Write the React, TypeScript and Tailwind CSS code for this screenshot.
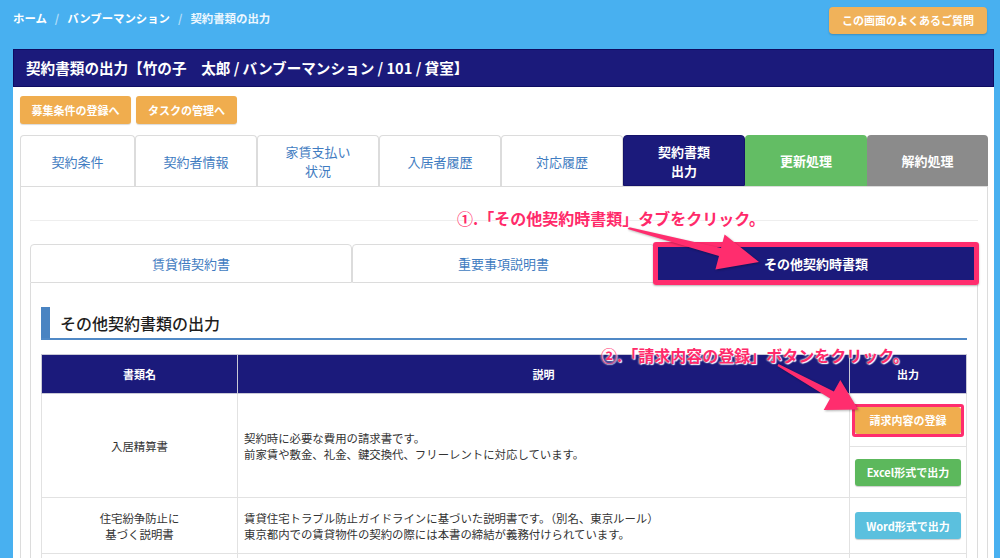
const navy = "bg-[#1b1a7b]";

const mainTabs = [
  { label: "契約条件", w: "w-[115px]" },
  { label: "契約者情報", w: "w-[122px]" },
  { label: "家賃支払い\n状況", w: "w-[122px]" },
  { label: "入居者履歴", w: "w-[122px]" },
  { label: "対応履歴", w: "w-[122px]" },
];

function OrangeBtn({ children, className = "" }: { children: React.ReactNode; className?: string }) {
  return (
    <button
      type="button"
      className={`flex h-[28px] items-center justify-center rounded-[3px] bg-[#f0ad4e] text-[11px] font-bold text-white shadow-[0_1px_1px_rgba(0,0,0,0.15)] ${className}`}
    >
      {children}
    </button>
  );
}

function TableBtn({ children, color }: { children: React.ReactNode; color: string }) {
  return (
    <button
      type="button"
      className={`flex h-[27px] w-[106px] items-center justify-center rounded-[3px] text-[11px] font-bold text-white shadow-[0_1px_1px_rgba(0,0,0,0.2)] ${color}`}
    >
      {children}
    </button>
  );
}

export default function App() {
  return (
    <div
      className="relative h-[558px] w-[1000px] overflow-hidden bg-[#48b0f0]"
      style={{ fontFamily: '"Noto Sans CJK JP", "Noto Sans", sans-serif' }}
    >
      {/* top bar */}
      <div className="flex h-[49px] items-start justify-between px-[13px]">
        <div className="flex items-center gap-[8px] pt-[10px] text-[11.4px] font-bold leading-[16px] text-white">
          <span>ホーム</span>
          <span className="text-white/60">/</span>
          <span>バンブーマンション</span>
          <span className="text-white/60">/</span>
          <span className="text-white/90">契約書類の出力</span>
        </div>
        <button
          type="button"
          className="mt-[7px] flex h-[27px] w-[158px] items-center justify-center rounded-[4px] bg-[#f0b25a] text-[11px] font-bold text-white shadow-[0_1px_2px_rgba(0,0,0,0.2)]"
        >
          この画面のよくあるご質問
        </button>
      </div>

      {/* panel */}
      <div className="ml-[13px] w-[981px]">
        <div className={`flex h-[38px] items-center border border-[#0e0c62] ${navy} px-[12px] text-[14.6px] font-bold text-white`}>
          契約書類の出力【竹の子　太郎 / バンブーマンション / 101 / 貸室】
        </div>

        <div className="h-[600px] bg-white pl-[7px] pr-[6px] pt-[9px]">
          <div className="flex gap-[5px]">
            <OrangeBtn className="w-[111px]">募集条件の登録へ</OrangeBtn>
            <OrangeBtn className="w-[101px]">タスクの管理へ</OrangeBtn>
          </div>

          {/* main tabs */}
          <div className="mt-[11px] flex h-[51px]">
            {mainTabs.map((t) => (
              <div
                key={t.label}
                className={`flex ${t.w} items-center justify-center whitespace-pre-line rounded-t-[4px] border border-b-0 border-[#dcdcdc] text-center text-[13px] leading-[19px] text-[#3f7cc1]`}
              >
                {t.label}
              </div>
            ))}
            <div className={`flex w-[122px] items-center justify-center rounded-t-[4px] border border-[#15136a] ${navy} text-center text-[13px] font-bold leading-[19px] text-white`}>
              契約書類
              <br />
              出力
            </div>
            <div className="flex w-[122px] items-center justify-center rounded-t-[4px] bg-[#63bd64] text-[13px] font-bold text-white">
              更新処理
            </div>
            <div className="flex w-[121px] items-center justify-center rounded-t-[4px] bg-[#8b8b8b] text-[13px] font-bold text-white">
              解約処理
            </div>
          </div>

          {/* tab content */}
          <div className="h-[500px] border-x border-t border-[#dcdcdc] px-[9px] pt-[33px]">
            <div className="border-t border-[#eeeeee]" />

            {/* sub tabs */}
            <div className="mt-[23px] flex h-[39px]">
              <div className="flex w-[322px] items-center justify-center rounded-t-[4px] border border-[#dcdcdc] text-[13px] text-[#3f7cc1]">
                賃貸借契約書
              </div>
              <div className="flex w-[303px] items-center justify-center rounded-t-[4px] border border-[#dcdcdc] text-[13px] text-[#3f7cc1]">
                重要事項説明書
              </div>
              <div className={`relative flex w-[322px] items-center justify-center ${navy} text-[13px] font-bold text-white`}>
                その他契約時書類
                <div className="absolute -inset-[2px] rounded-[3px] border-[5px] border-[#ff2d6e] shadow-[0_1px_2px_rgba(0,0,0,0.3)]" />
              </div>
            </div>

            {/* sub content */}
            <div className="h-[400px] border-x border-[#dcdcdc] px-[10px] pt-[24px]">
              <div className="flex h-[33px] border-b-2 border-[#5089c6]">
                <div className="w-[9px] bg-[#4a84c2]" />
                <div className="ml-[10px] flex items-center text-[16px] font-medium text-[#1e1e1e]">
                  その他契約書類の出力
                </div>
              </div>

              <table className="mt-[14px] w-[925px] table-fixed border-collapse text-[11.4px] text-[#333]">
                <colgroup>
                  <col className="w-[196px]" />
                  <col className="w-[612px]" />
                  <col className="w-[117px]" />
                </colgroup>
                <thead>
                  <tr className={`h-[39px] ${navy} text-[11px] text-white`}>
                    <th className="border border-[#c9c9d6] font-bold">書類名</th>
                    <th className="border border-[#c9c9d6] font-bold">説明</th>
                    <th className="border border-[#c9c9d6] font-bold">出力</th>
                  </tr>
                </thead>
                <tbody className="leading-[16px]">
                  <tr>
                    <td className="border border-[#e2e2e2] text-center">入居精算書</td>
                    <td className="border border-[#e2e2e2] px-[6px]">
                      契約時に必要な費用の請求書です。
                      <br />
                      前家賃や敷金、礼金、鍵交換代、フリーレントに対応しています。
                    </td>
                    <td className="border border-[#e2e2e2] p-0">
                      <div className="flex h-[53px] items-center justify-center border-b border-[#e2e2e2]">
                        <div className="relative">
                          <TableBtn color="bg-[#f0ad4e]">請求内容の登録</TableBtn>
                          <div className="absolute -inset-[3px] rounded-[3px] border-[3px] border-[#ff2d6e]" />
                        </div>
                      </div>
                      <div className="flex h-[50px] items-center justify-center">
                        <TableBtn color="bg-[#5cb85c]">Excel形式で出力</TableBtn>
                      </div>
                    </td>
                  </tr>
                  <tr className="h-[56px]">
                    <td className="border border-[#e2e2e2] text-center">
                      住宅紛争防止に
                      <br />
                      基づく説明書
                    </td>
                    <td className="border border-[#e2e2e2] px-[6px]">
                      賃貸住宅トラブル防止ガイドラインに基づいた説明書です。（別名、東京ルール）
                      <br />
                      東京都内での賃貸物件の契約の際には本書の締結が義務付けられています。
                    </td>
                    <td className="border border-[#e2e2e2]">
                      <div className="flex items-center justify-center">
                        <TableBtn color="bg-[#5bc0de]">Word形式で出力</TableBtn>
                      </div>
                    </td>
                  </tr>
                  <tr className="h-[56px]">
                    <td className="border border-[#e2e2e2]" />
                    <td className="border border-[#e2e2e2]" />
                    <td className="border border-[#e2e2e2]" />
                  </tr>
                </tbody>
              </table>
            </div>
          </div>
        </div>
      </div>

      {/* annotations */}
      <svg
        className="pointer-events-none absolute left-0 top-0 [filter:drop-shadow(1px_1px_1px_rgba(0,0,0,0.3))]"
        width="1000"
        height="558"
      >
        <polygon
          fill="#ff2d6e"
          points="628.3,227 721,248.1 724.6,234.6 759,262 715.4,269.4 719,255.9 627.7,229"
        />
        <polygon
          fill="#ff2d6e"
          points="778.5,364.1 833.9,391.5 840.3,380.1 858.2,409.6 823.7,409.9 830.1,398.5 777.5,365.9"
        />
      </svg>
      <div className="absolute left-[457px] top-[207px] text-[16px] font-bold leading-[22px] text-[#ff2a6a] [text-shadow:0_0_2px_#fff,0_0_2px_#fff,1px_1px_1px_#fff]">
        ①.「その他契約時書類」タブをクリック。
      </div>
      <div className="absolute left-[601px] top-[344px] text-[16px] font-bold leading-[22px] text-[#ff2a6a] [text-shadow:0_0_2px_#fff,0_0_2px_#fff,1px_1px_1px_#fff]">
        ②.「請求内容の登録」ボタンをクリック。
      </div>
    </div>
  );
}
